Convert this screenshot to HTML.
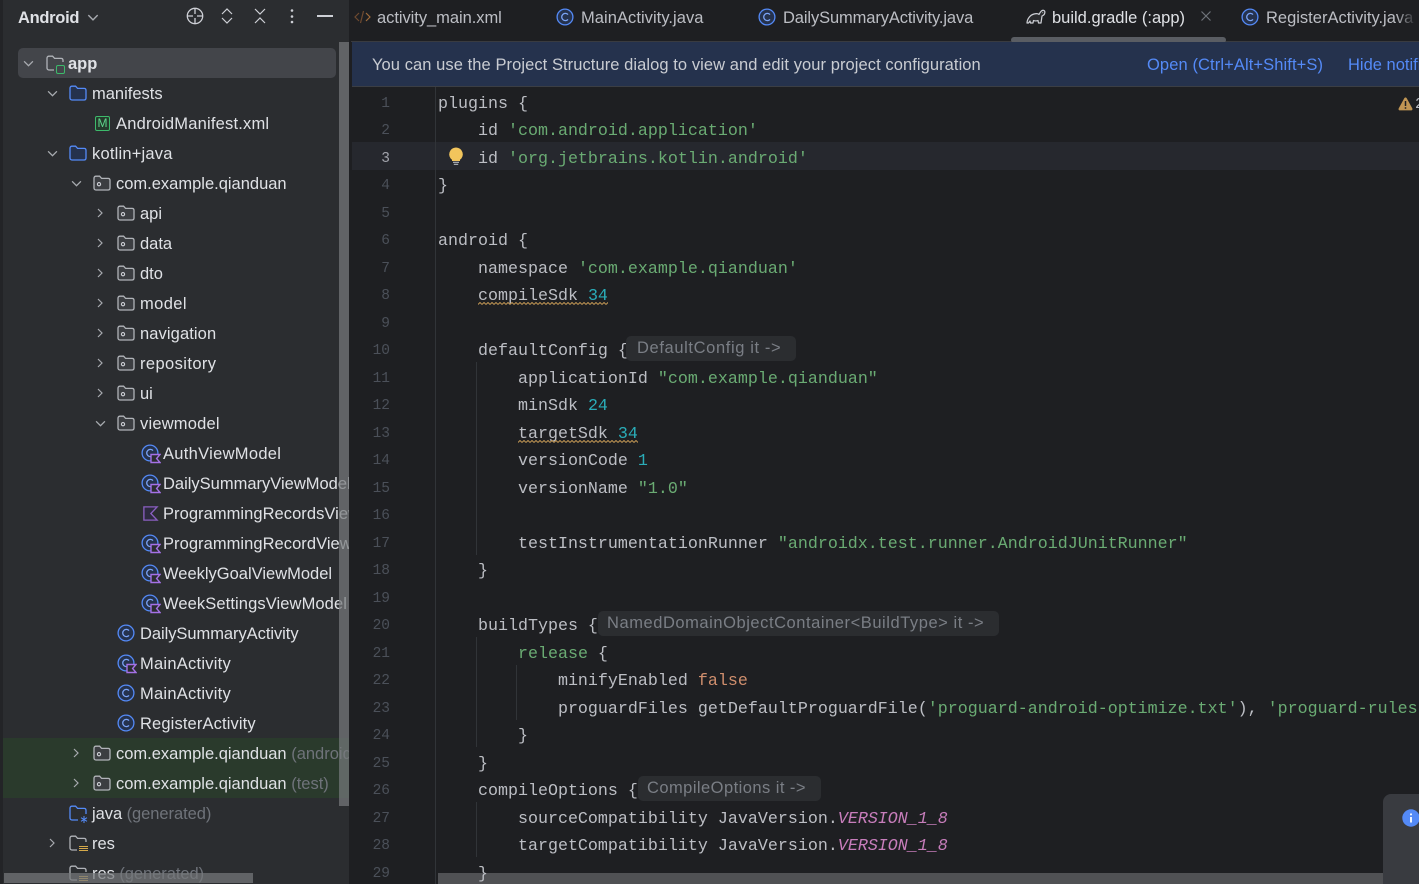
<!DOCTYPE html>
<html><head><meta charset="utf-8">
<style>
html,body{margin:0;padding:0;background:#1e1f22}
#r{position:relative;width:1419px;height:884px;overflow:hidden;background:#1e1f22;font-family:"Liberation Sans","Noto Sans CJK SC",sans-serif}
#r div,#r svg{position:absolute}
#side{left:0;top:0;width:351px;height:884px;background:#2b2d30;overflow:hidden}
.t{font-size:16.5px;color:#dfe1e5;white-space:nowrap;line-height:30px;height:30px;margin-top:1px}
.t i{font-style:normal;color:#6f737a}
.c{font:16.67px/27.5px "Liberation Mono",monospace;color:#bcbec4;white-space:pre;left:438px;height:27.5px;margin-top:2.5px}
.n{left:352px;width:38px;text-align:right;font:14.5px/27.5px "Liberation Mono",monospace;color:#4b5059;height:27.5px;margin-top:2.5px}
.s{color:#6aab73}.d{color:#2aacb8}.o{color:#cf8e6d}.p{color:#c77dbb;font-style:italic}
.h{background:#2b2d30;border-radius:5px;height:25px;color:#7a7e85;font-size:16.5px;line-height:25px;white-space:nowrap;padding-left:11px;box-sizing:border-box}
.tab{font-size:16.5px;line-height:20px;color:#bcbec4;white-space:nowrap;top:8px}
.g{width:1px;background:#313438}
</style></head><body>
<div id="r">
<svg width="0" height="0" style="left:0;top:0">
<defs>
<pattern id="zz" width="4" height="3" patternUnits="userSpaceOnUse"><path d="M0 2.500L2 .5l2 2" fill="none" stroke="#c09553" stroke-width="1"/></pattern>
<symbol id="fb" viewBox="0 0 18 16"><path d="M1 3.200C1 2 1.800 1.200 3 1.200h3.600l2 2.200H15c1.200 0 2 .8 2 2V13c0 1.200-.8 2-2 2H3c-1.200 0-2-.8-2-2z" fill="#25324d" stroke="#548af7" stroke-width="1.300"/></symbol>
<symbol id="fp" viewBox="0 0 18 16"><path d="M1 3.200C1 2 1.800 1.200 3 1.200h3.600l2 2.200H15c1.200 0 2 .8 2 2V13c0 1.200-.8 2-2 2H3c-1.200 0-2-.8-2-2z" fill="#3c3e42" stroke="#b0b3b8" stroke-width="1.300"/><circle cx="6" cy="9.200" r="1.600" fill="none" stroke="#ced0d6" stroke-width="1.100"/></symbol>
<symbol id="fg" viewBox="0 0 18 16"><path d="M8 15H3c-1.200 0-2-.8-2-2V3.200C1 2 1.800 1.200 3 1.200h3.600l2 2.200H15c1.200 0 2 .8 2 2V7" fill="none" stroke="#b0b3b8" stroke-width="1.300"/></symbol>
<symbol id="cc" viewBox="0 0 18 18"><circle cx="9" cy="9" r="7.900" fill="#25324d" stroke="#548af7" stroke-width="1.300"/><path d="M12 6.600A3.600 3.600 0 1 0 12 11.400" fill="none" stroke="#7ba4f7" stroke-width="1.300"/></symbol>
<symbol id="ck" viewBox="0 0 20 20"><circle cx="9" cy="9" r="7.900" fill="#25324d" stroke="#548af7" stroke-width="1.300"/><path d="M12 6.600A3.600 3.600 0 1 0 12 11.400" fill="none" stroke="#7ba4f7" stroke-width="1.300"/><path d="M10 10.500h9l-3.400 4 3.400 4h-9z" fill="#2b2d30" stroke="#a571e6" stroke-width="1.400"/></symbol>
<symbol id="kt" viewBox="0 0 18 18"><path d="M2 2h14l-6.600 7 6.600 7H2z" fill="#2d2a3f" stroke="#8a5fc0" stroke-width="1.400"/></symbol>
<symbol id="cd" viewBox="0 0 10 6"><path d="M1 1l4 4 4-4" fill="none" stroke="#a8abb0" stroke-width="1.200"/></symbol>
<symbol id="cr" viewBox="0 0 6 10"><path d="M1 1l4 4-4 4" fill="none" stroke="#a8abb0" stroke-width="1.200"/></symbol>
</defs>
</svg>

<div id="side">
<div style="left:0;top:0;width:3px;height:884px;background:#232427"></div>
<div style="left:3px;top:738px;width:348px;height:60px;background:#2a3a2c"></div>
<div style="left:18px;top:48px;width:318px;height:30px;background:#43454a;border-radius:5px"></div>

<div class="t" style="left:18px;top:2px;font-weight:bold;letter-spacing:-.3px">Android</div>
<svg style="left:87px;top:14px" width="12" height="7"><use href="#cd"/></svg>
<svg style="left:186px;top:7px" width="18" height="18" viewBox="0 0 18 18" fill="none" stroke="#ced0d6" stroke-width="1.300"><circle cx="9" cy="9" r="7.700"/><path d="M9 1v6M9 11v6M1 9h6M11 9h6"/></svg>
<svg style="left:221px;top:8px" width="12" height="16" viewBox="0 0 12 16" fill="none" stroke="#ced0d6" stroke-width="1.200"><path d="M1 6l5-5 5 5M1 10l5 5 5-5"/></svg>
<svg style="left:254px;top:8px" width="12" height="16" viewBox="0 0 12 16" fill="none" stroke="#ced0d6" stroke-width="1.200"><path d="M1 1l5 5 5-5M1 15l5-5 5 5"/></svg>
<svg style="left:290px;top:8px" width="4" height="16" fill="#ced0d6"><circle cx="2" cy="2.500" r="1.300"/><circle cx="2" cy="8.500" r="1.300"/><circle cx="2" cy="14" r="1.300"/></svg>
<div style="left:317px;top:15px;width:16px;height:1.500px;background:#ced0d6"></div>

<svg style="left:23px;top:60px" width="11" height="7"><use href="#cd"/></svg>
<svg style="left:46px;top:55px" width="18" height="16"><use href="#fg"/></svg>
<div style="left:56px;top:65px;width:7px;height:7px;border:1.300px solid #3dba6b;border-radius:2px"></div>
<div class="t" style="left:68px;top:48px;font-weight:bold">app</div>

<svg style="left:47px;top:90px" width="11" height="7"><use href="#cd"/></svg>
<svg style="left:69px;top:85px" width="18" height="16"><use href="#fb"/></svg>
<div class="t" style="left:92px;top:78px">manifests</div>

<div style="left:95px;top:116px;width:13px;height:13px;border:1.400px solid #3dba6b;border-radius:2px;background:#253a2c;color:#5fd58c;font-size:12px;line-height:13px;text-align:center">M</div>
<div class="t" style="left:116px;top:108px;letter-spacing:.2px">AndroidManifest.xml</div>

<svg style="left:47px;top:150px" width="11" height="7"><use href="#cd"/></svg>
<svg style="left:69px;top:145px" width="18" height="16"><use href="#fb"/></svg>
<div class="t" style="left:92px;top:138px;letter-spacing:.2px">kotlin+java</div>

<svg style="left:71px;top:180px" width="11" height="7"><use href="#cd"/></svg>
<svg style="left:93px;top:175px" width="18" height="16"><use href="#fp"/></svg>
<div class="t" style="left:116px;top:168px">com.example.qianduan</div>

<svg style="left:97px;top:208px" width="6" height="10"><use href="#cr"/></svg>
<svg style="left:117px;top:205px" width="18" height="16"><use href="#fp"/></svg>
<div class="t" style="left:140px;top:198px">api</div>
<svg style="left:97px;top:238px" width="6" height="10"><use href="#cr"/></svg>
<svg style="left:117px;top:235px" width="18" height="16"><use href="#fp"/></svg>
<div class="t" style="left:140px;top:228px">data</div>
<svg style="left:97px;top:268px" width="6" height="10"><use href="#cr"/></svg>
<svg style="left:117px;top:265px" width="18" height="16"><use href="#fp"/></svg>
<div class="t" style="left:140px;top:258px">dto</div>
<svg style="left:97px;top:298px" width="6" height="10"><use href="#cr"/></svg>
<svg style="left:117px;top:295px" width="18" height="16"><use href="#fp"/></svg>
<div class="t" style="left:140px;top:288px;letter-spacing:.4px">model</div>
<svg style="left:97px;top:328px" width="6" height="10"><use href="#cr"/></svg>
<svg style="left:117px;top:325px" width="18" height="16"><use href="#fp"/></svg>
<div class="t" style="left:140px;top:318px;letter-spacing:.1px">navigation</div>
<svg style="left:97px;top:358px" width="6" height="10"><use href="#cr"/></svg>
<svg style="left:117px;top:355px" width="18" height="16"><use href="#fp"/></svg>
<div class="t" style="left:140px;top:348px;letter-spacing:.4px">repository</div>
<svg style="left:97px;top:388px" width="6" height="10"><use href="#cr"/></svg>
<svg style="left:117px;top:385px" width="18" height="16"><use href="#fp"/></svg>
<div class="t" style="left:140px;top:378px">ui</div>
<svg style="left:95px;top:420px" width="11" height="7"><use href="#cd"/></svg>
<svg style="left:117px;top:415px" width="18" height="16"><use href="#fp"/></svg>
<div class="t" style="left:140px;top:408px;letter-spacing:.2px">viewmodel</div>

<svg style="left:141px;top:444px" width="20" height="20"><use href="#ck"/></svg>
<div class="t" style="left:163px;top:438px;letter-spacing:.3px">AuthViewModel</div>
<svg style="left:141px;top:474px" width="20" height="20"><use href="#ck"/></svg>
<div class="t" style="left:163px;top:468px">DailySummaryViewModel</div>
<svg style="left:142px;top:505px" width="17" height="17"><use href="#kt"/></svg>
<div class="t" style="left:163px;top:498px;letter-spacing:.05px">ProgrammingRecordsViewModel</div>
<svg style="left:141px;top:534px" width="20" height="20"><use href="#ck"/></svg>
<div class="t" style="left:163px;top:528px;letter-spacing:.05px">ProgrammingRecordViewModel</div>
<svg style="left:141px;top:564px" width="20" height="20"><use href="#ck"/></svg>
<div class="t" style="left:163px;top:558px">WeeklyGoalViewModel</div>
<svg style="left:141px;top:594px" width="20" height="20"><use href="#ck"/></svg>
<div class="t" style="left:163px;top:588px;letter-spacing:.1px">WeekSettingsViewModel</div>

<svg style="left:117px;top:624px" width="18" height="18"><use href="#cc"/></svg>
<div class="t" style="left:140px;top:618px;letter-spacing:-.05px">DailySummaryActivity</div>
<svg style="left:117px;top:654px" width="20" height="20"><use href="#ck"/></svg>
<div class="t" style="left:140px;top:648px;letter-spacing:.25px">MainActivity</div>
<svg style="left:117px;top:684px" width="18" height="18"><use href="#cc"/></svg>
<div class="t" style="left:140px;top:678px;letter-spacing:.25px">MainActivity</div>
<svg style="left:117px;top:714px" width="18" height="18"><use href="#cc"/></svg>
<div class="t" style="left:140px;top:708px;letter-spacing:.13px">RegisterActivity</div>

<svg style="left:73px;top:748px" width="6" height="10"><use href="#cr"/></svg>
<svg style="left:93px;top:745px" width="18" height="16"><use href="#fp"/></svg>
<div class="t" style="left:116px;top:738px">com.example.qianduan <i>(androidTest)</i></div>
<svg style="left:73px;top:778px" width="6" height="10"><use href="#cr"/></svg>
<svg style="left:93px;top:775px" width="18" height="16"><use href="#fp"/></svg>
<div class="t" style="left:116px;top:768px">com.example.qianduan <i>(test)</i></div>

<svg style="left:69px;top:805px" width="22" height="19" viewBox="0 0 22 19" fill="none" stroke="#548af7" stroke-width="1.300"><path d="M9 15H3c-1.200 0-2-.8-2-2V3.200C1 2 1.800 1.200 3 1.200h3.600l2 2.200H15c1.200 0 2 .8 2 2V9"/><path d="M15 11v7M12 12.700l6 3.600M18 12.700l-6 3.600" stroke-width="1"/></svg>
<div class="t" style="left:92px;top:798px;letter-spacing:-.05px">java <i>(generated)</i></div>

<svg style="left:49px;top:838px" width="6" height="10"><use href="#cr"/></svg>
<svg style="left:69px;top:835px" width="18" height="16"><use href="#fg"/></svg>
<div style="left:79px;top:846px;width:9px;height:6px;background:repeating-linear-gradient(#d5a94a 0 1px,#2b2d30 1px 2px)"></div>
<div class="t" style="left:92px;top:828px">res</div>
<svg style="left:69px;top:865px" width="18" height="16"><use href="#fg"/></svg>
<div style="left:79px;top:876px;width:9px;height:6px;background:repeating-linear-gradient(#d5a94a 0 1px,#2b2d30 1px 2px)"></div>
<div class="t" style="left:92px;top:858px;letter-spacing:-.05px">res <i>(generated)</i></div>

<div style="left:339px;top:42px;width:10px;height:764px;background:rgba(118,120,124,.72)"></div>
<div style="left:4px;top:873px;width:249px;height:10px;background:rgba(118,120,124,.72)"></div>
<div style="left:349px;top:0;width:2px;height:884px;background:#1e1f22"></div>
</div>

<!-- tabs -->
<svg style="left:354px;top:10px" width="17" height="14" viewBox="0 0 17 14" fill="none" stroke-width="1.200"><path d="M5 3L1 7l4 4" stroke="#6f4a30"/><path d="M9.500 1L6.500 13" stroke="#6f4a30"/><path d="M12 3l4 4-4 4" stroke="#a06c3c"/></svg>
<div class="tab" style="left:377px;letter-spacing:-.05px">activity_main.xml</div>
<svg style="left:556px;top:8px" width="18" height="18"><use href="#cc"/></svg>
<div class="tab" style="left:581px;letter-spacing:.05px">MainActivity.java</div>
<svg style="left:758px;top:8px" width="18" height="18"><use href="#cc"/></svg>
<div class="tab" style="left:783px;letter-spacing:-.12px">DailySummaryActivity.java</div>
<svg style="left:1026px;top:8px" width="20" height="17" viewBox="0 0 20 17" fill="#2a2b2e" stroke="#ced0d6" stroke-width="1.200" stroke-linejoin="round"><path d="M1 15c.2-4 3-8 7-9 2-.5 4-.5 5 .5 1-2 3-5 5-4 1.500.8 1 4-1 5l-1 .5-1 7h-2.500l-.5-2.500c-1.500.6-3 .6-4.500 0L7 15H4.500l-.5-2-1.500 2z"/><path d="M16.500 4.500h.6"/></svg>
<div class="tab" style="left:1052px;color:#dfe1e5">build.gradle (:app)</div>
<svg style="left:1201px;top:11px" width="10" height="10" fill="none" stroke="#6f737a" stroke-width="1.200"><path d="M.5.5l9 9M9.500.5l-9 9"/></svg>
<svg style="left:1241px;top:8px" width="18" height="18"><use href="#cc"/></svg>
<div class="tab" style="left:1266px">RegisterActivity.java</div>
<div style="left:1396px;top:0;width:23px;height:40px;background:linear-gradient(90deg,rgba(30,31,34,0),#1e1f22 90%)"></div>
<div style="left:351px;top:41px;width:1068px;height:1px;background:#393b40"></div>
<div style="left:1011px;top:37px;width:215px;height:6px;border-radius:3px;background:#5a5d63"></div>

<!-- banner -->
<div style="left:352px;top:42px;width:1067px;height:44px;background:#25324d;border-bottom:1px solid #3b3e44"></div>
<div class="tab" style="left:372px;top:55px;color:#c9ccd2;letter-spacing:.07px">You can use the Project Structure dialog to view and edit your project configuration</div>
<div class="tab" style="left:1147px;top:55px;color:#548af7;letter-spacing:.1px">Open (Ctrl+Alt+Shift+S)</div>
<div class="tab" style="left:1348px;top:55px;color:#548af7">Hide notification</div>

<!-- editor -->
<div style="left:352px;top:142px;width:1067px;height:28px;background:#26282e"></div>
<div style="left:435px;top:87px;width:1px;height:797px;background:#313438"></div>
<div class="g" style="left:476px;top:362px;height:193px"></div>
<div class="g" style="left:476px;top:637px;height:110px"></div>
<div class="g" style="left:516px;top:665px;height:55px"></div>
<div class="g" style="left:476px;top:802px;height:55px"></div>
<div style="left:438px;top:873px;width:945px;height:11px;background:#505154"></div>

<div class="n" style="top:88px">1</div>
<div class="n" style="top:115.5px">2</div>
<div class="n" style="top:143px;color:#a1a3ab">3</div>
<div class="n" style="top:170.5px">4</div>
<div class="n" style="top:198px">5</div>
<div class="n" style="top:225.5px">6</div>
<div class="n" style="top:253px">7</div>
<div class="n" style="top:280.5px">8</div>
<div class="n" style="top:308px">9</div>
<div class="n" style="top:335.5px">10</div>
<div class="n" style="top:363px">11</div>
<div class="n" style="top:390.5px">12</div>
<div class="n" style="top:418px">13</div>
<div class="n" style="top:445.5px">14</div>
<div class="n" style="top:473px">15</div>
<div class="n" style="top:500.5px">16</div>
<div class="n" style="top:528px">17</div>
<div class="n" style="top:555.5px">18</div>
<div class="n" style="top:583px">19</div>
<div class="n" style="top:610.5px">20</div>
<div class="n" style="top:638px">21</div>
<div class="n" style="top:665.5px">22</div>
<div class="n" style="top:693px">23</div>
<div class="n" style="top:720.5px">24</div>
<div class="n" style="top:748px">25</div>
<div class="n" style="top:775.5px">26</div>
<div class="n" style="top:803px">27</div>
<div class="n" style="top:830.5px">28</div>
<div class="n" style="top:858px">29</div>

<div class="c" style="top:88px">plugins {</div>
<div class="c" style="top:115.5px">    id <span class="s">'com.android.application'</span></div>
<div class="c" style="top:143px">    id <span class="s">'org.jetbrains.kotlin.android'</span></div>
<div class="c" style="top:170.5px">}</div>
<div class="c" style="top:225.5px">android {</div>
<div class="c" style="top:253px">    namespace <span class="s">'com.example.qianduan'</span></div>
<div class="c" style="top:280.5px">    compileSdk <span class="d">34</span></div>
<div class="c" style="top:335.5px">    defaultConfig {</div>
<div class="c" style="top:363px">        applicationId <span class="s">"com.example.qianduan"</span></div>
<div class="c" style="top:390.5px">        minSdk <span class="d">24</span></div>
<div class="c" style="top:418px">        targetSdk <span class="d">34</span></div>
<div class="c" style="top:445.5px">        versionCode <span class="d">1</span></div>
<div class="c" style="top:473px">        versionName <span class="s">"1.0"</span></div>
<div class="c" style="top:528px">        testInstrumentationRunner <span class="s">"androidx.test.runner.AndroidJUnitRunner"</span></div>
<div class="c" style="top:555.5px">    }</div>
<div class="c" style="top:610.5px">    buildTypes {</div>
<div class="c" style="top:638px">        <span class="s">release</span> {</div>
<div class="c" style="top:665.5px">            minifyEnabled <span class="o">false</span></div>
<div class="c" style="top:693px">            proguardFiles getDefaultProguardFile(<span class="s">'proguard-android-optimize.txt'</span>), <span class="s">'proguard-rules.pro'</span></div>
<div class="c" style="top:720.5px">        }</div>
<div class="c" style="top:748px">    }</div>
<div class="c" style="top:775.5px">    compileOptions {</div>
<div class="c" style="top:803px">        sourceCompatibility JavaVersion.<span class="p">VERSION_1_8</span></div>
<div class="c" style="top:830.5px">        targetCompatibility JavaVersion.<span class="p">VERSION_1_8</span></div>
<div class="c" style="top:858px">    }</div>

<svg style="left:478px;top:302px" width="130" height="3"><rect width="130" height="3" fill="url(#zz)"/></svg>
<svg style="left:518px;top:440px" width="120" height="3"><rect width="120" height="3" fill="url(#zz)"/></svg>

<div class="h" style="left:626px;top:336px;width:170px;letter-spacing:.62px">DefaultConfig it -&gt;</div>
<div class="h" style="left:598px;top:611px;width:401px;padding-left:9px;letter-spacing:.55px">NamedDomainObjectContainer&lt;BuildType&gt; it -&gt;</div>
<div class="h" style="left:638px;top:776px;width:183px;padding-left:9px;letter-spacing:.45px">CompileOptions it -&gt;</div>

<svg style="left:448px;top:147px" width="16" height="19" viewBox="0 0 16 19"><path d="M8 .5a6.800 6.800 0 0 0-4 12.300V14h8v-1.200A6.800 6.800 0 0 0 8 .5z" fill="#f2c55c"/><path d="M5 15.300h6M5.800 17.300h4.400" stroke="#b4b8bf" stroke-width="1.200"/></svg>
<svg style="left:1398px;top:97px" width="15" height="14" viewBox="0 0 15 14"><path d="M7.500.5c.6 0 1 .3 1.300.9l5.500 10c.5 1-.1 2-1.200 2H1.900c-1.100 0-1.700-1-1.200-2l5.500-10c.3-.6.700-.9 1.300-.9z" fill="#c09553"/><path d="M7.500 4v5M7.500 10.300v1.400" stroke="#1e1f22" stroke-width="1.500"/></svg>
<div class="c" style="left:1415px;top:88px;color:#bcbec4;font-size:15px">2</div>

<div style="left:1383px;top:794px;width:40px;height:95px;background:#393b40;border-radius:8px 0 0 0"></div>
<svg style="left:1402px;top:809px" width="17" height="18" viewBox="0 0 17 18"><circle cx="9" cy="9" r="8.700" fill="#548af7"/><path d="M9 4.500v1.800M9 8v5.500" stroke="#fff" stroke-width="1.800"/></svg>
</div>
</body></html>
